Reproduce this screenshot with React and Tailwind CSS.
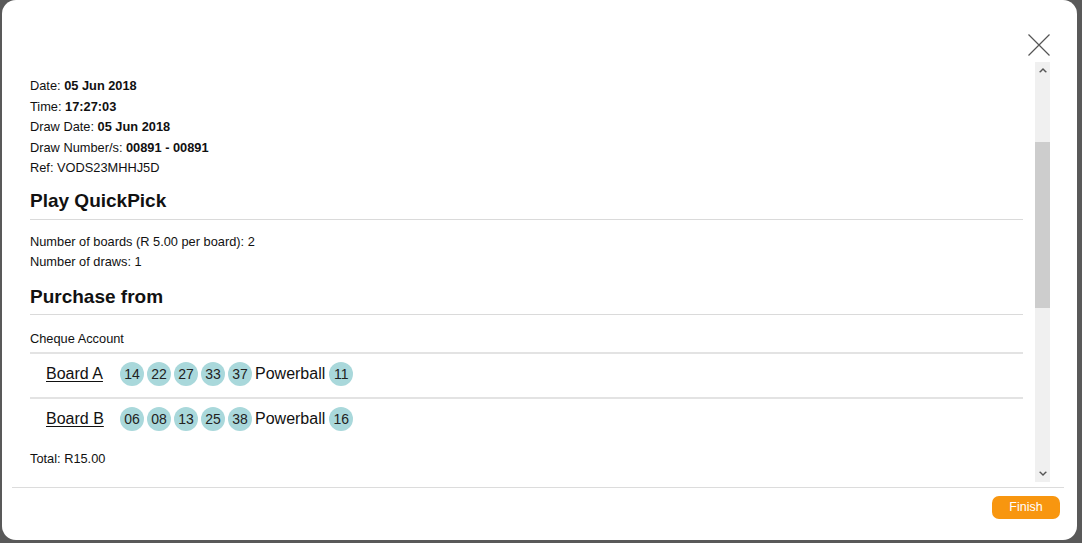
import React from "react";

const boards = [
  { name: "Board A", nums: ["14", "22", "27", "33", "37"], pb: "11" },
  { name: "Board B", nums: ["06", "08", "13", "25", "38"], pb: "16" },
];

function Ball({ n }) {
  return (
    <span className="w-[24px] h-[24px] rounded-full bg-[#a9d8db] flex items-center justify-center text-[14px] text-[#222]">
      {n}
    </span>
  );
}

function Scrollbar() {
  return (
    <div className="w-[15px] h-full bg-[#f0f0f0] flex flex-col items-center">
      <div className="h-[16px] flex items-center justify-center">
        <svg width="8" height="6" viewBox="0 0 8 6"><path d="M0 5 L4 1 L8 5 L6.5 5.5 L4 3 L1.5 5.5 Z" fill="#555" /></svg>
      </div>
      <div className="h-[64px]" />
      <div className="w-full h-[166px] bg-[#cdcdcd]" />
      <div className="flex-1" />
      <div className="h-[16px] flex items-center justify-center">
        <svg width="8" height="6" viewBox="0 0 8 6"><path d="M0 1 L4 5 L8 1 L6.5 0.5 L4 3 L1.5 0.5 Z" fill="#555" /></svg>
      </div>
    </div>
  );
}

export default function App() {
  return (
    <div className="w-full h-[543px] bg-[#595959] flex pl-[2px] pr-[5px] pb-[3px] font-['Liberation_Sans',Arial,sans-serif] text-[#111]">
      <div className="flex-1 bg-white rounded-[14px] flex flex-col">
        <div className="h-[62px] flex justify-end items-end pr-[27px] pb-[6px]">
          <svg width="22" height="22" viewBox="0 0 22 22">
            <path d="M0.5 0.5 L21.5 21.5 M21.5 0.5 L0.5 21.5" stroke="#555" strokeWidth="1.2" />
          </svg>
        </div>
        <div className="h-[420px] flex pl-[28px] pr-[27px]">
          <div className="flex-1 pr-[12px] pt-[14px] text-[12.8px] leading-[20.5px]">
            <div>Date: <b>05 Jun 2018</b></div>
            <div>Time: <b>17:27:03</b></div>
            <div>Draw Date: <b>05 Jun 2018</b></div>
            <div>Draw Number/s: <b>00891 - 00891</b></div>
            <div>Ref: VODS23MHHJ5D</div>
            <h2 className="mt-[11px] text-[19px] leading-[22px] font-bold">Play QuickPick</h2>
            <div className="mt-[7px] h-px bg-[#dadada]" />
            <div className="mt-[12px]">Number of boards (R 5.00 per board): 2</div>
            <div>Number of draws: 1</div>
            <h2 className="mt-[13px] text-[19px] leading-[22px] font-bold">Purchase from</h2>
            <div className="mt-[6px] h-px bg-[#dadada]" />
            <div className="mt-[14px]">Cheque Account</div>
            {boards.map((b) => (
              <div key={b.name}>
                <div className="mt-[3px] h-[2px] bg-[#e3e3e3]" />
                <div className="flex items-center pt-[8px] pb-[8px] pl-[16px] text-[16px] leading-[24px]">
                  <a className="w-[74px] underline underline-offset-2 text-[#111]">{b.name}</a>
                  <div className="flex items-center gap-[3px]">
                    {b.nums.map((n) => (
                      <Ball key={n} n={n} />
                    ))}
                    <span className="mr-[1px]">Powerball</span>
                    <Ball n={b.pb} />
                  </div>
                </div>
              </div>
            ))}
            <div className="mt-[10px]">Total: R15.00</div>
          </div>
          <Scrollbar />
        </div>
        <div className="mt-[5px] ml-[10px] mr-[13px] h-px bg-[#dcdcdc]" />
        <div className="flex justify-end pr-[17px] mt-[8px]">
          <button className="w-[68px] h-[23px] rounded-[7px] bg-[#f8960f] text-white text-[12.5px]">Finish</button>
        </div>
      </div>
    </div>
  );
}
